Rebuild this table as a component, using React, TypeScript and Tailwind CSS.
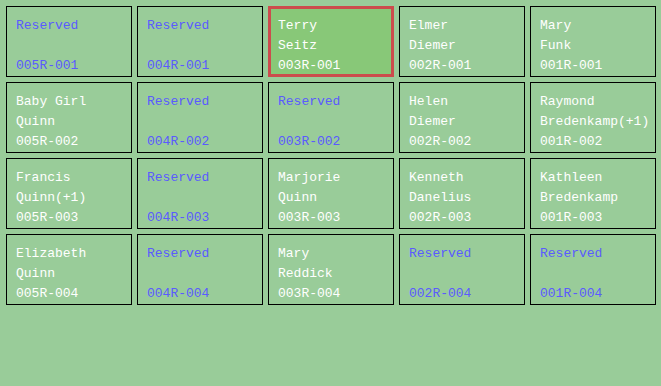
import React from 'react';

interface Slot {
    first?: string;
    last?: string;
    code: string;
}

// rows of plots, columns run 005 -> 001
const rows: Slot[][] = [
    [
        { code: '005R-001' },
        { code: '004R-001' },
        { first: 'Terry', last: 'Seitz', code: '003R-001' },
        { first: 'Elmer', last: 'Diemer', code: '002R-001' },
        { first: 'Mary', last: 'Funk', code: '001R-001' },
    ],
    [
        { first: 'Baby Girl', last: 'Quinn', code: '005R-002' },
        { code: '004R-002' },
        { code: '003R-002' },
        { first: 'Helen', last: 'Diemer', code: '002R-002' },
        { first: 'Raymond', last: 'Bredenkamp(+1)', code: '001R-002' },
    ],
    [
        { first: 'Francis', last: 'Quinn(+1)', code: '005R-003' },
        { code: '004R-003' },
        { first: 'Marjorie', last: 'Quinn', code: '003R-003' },
        { first: 'Kenneth', last: 'Danelius', code: '002R-003' },
        { first: 'Kathleen', last: 'Bredenkamp', code: '001R-003' },
    ],
    [
        { first: 'Elizabeth', last: 'Quinn', code: '005R-004' },
        { code: '004R-004' },
        { first: 'Mary', last: 'Reddick', code: '003R-004' },
        { code: '002R-004' },
        { code: '001R-004' },
    ],
];

const Cell: React.FC<{ slot: Slot; selected?: boolean }> = ({ slot, selected }) => {
    const reserved = !slot.first;
    return (
        <div
            className={`h-[71px] w-[126px] text-[13px] leading-[20px] ${
                selected
                    ? 'border-[3px] border-[#cc4c4c] bg-[#88c878] pl-[7px] pt-[7px]'
                    : 'border border-black bg-[#99cc99] pl-[9px] pt-[9px]'
            } ${reserved ? 'text-[#5a5aff]' : 'text-white'}`}
        >
            {reserved ? (
                <>
                    <div>Reserved</div>
                    <div>&nbsp;</div>
                </>
            ) : (
                <>
                    <div className="whitespace-nowrap">{slot.first}</div>
                    <div className="whitespace-nowrap">{slot.last}</div>
                </>
            )}
            <div>{slot.code}</div>
        </div>
    );
};

export default function App() {
    return (
        <div
            className="min-h-screen w-full bg-[#99cc99] pl-[6px] pt-[6px]"
            style={{ fontFamily: '"Liberation Mono", "DejaVu Sans Mono", monospace' }}
        >
            <div className="grid grid-cols-[repeat(5,126px)] gap-[5px]">
                {rows.map((row, r) =>
                    row.map((slot, c) => (
                        <Cell key={`${r}-${c}`} slot={slot} selected={r === 0 && c === 2} />
                    ))
                )}
            </div>
        </div>
    );
}
